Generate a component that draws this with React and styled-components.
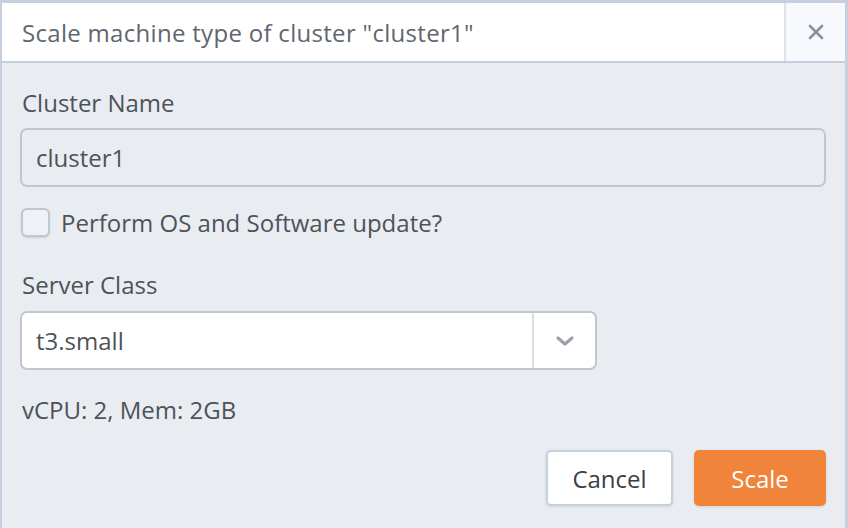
import React, { useState } from "react";
import styled, { createGlobalStyle } from "styled-components";

const Global = createGlobalStyle`
  html, body { margin: 0; padding: 0; background: #e9edf2; }
  body { font-family: "Open Sans", "Noto Sans", sans-serif; }
  * { box-sizing: border-box; }
`;

const Dialog = styled.div`
  width: 848px;
  height: 528px;
  background: #e9edf2;
  border-top: 3px solid #c6cfdd;
  border-left: 2px solid #c6cfdd;
  border-right: 3px solid #c6cfdd;
  display: flex;
  flex-direction: column;
`;

const Header = styled.div`
  height: 60px;
  background: #fff;
  border-bottom: 2px solid #c6cfdd;
  display: flex;
  align-items: stretch;
`;

const Title = styled.h3`
  flex: 1;
  margin: 0;
  padding-left: 20px;
  display: flex;
  align-items: center;
  font-size: 24px;
  font-weight: 400;
  color: #5f6670;
  letter-spacing: 0.3px;
`;

const Close = styled.button`
  width: 61px;
  border: none;
  border-left: 2px solid #dfe4ec;
  background: #f8f9fc;
  display: flex;
  align-items: center;
  justify-content: center;
  padding: 0;
  cursor: pointer;
`;

const Body = styled.div`
  padding: 24px 19px 0 18px;
  display: flex;
  flex-direction: column;
`;

const Label = styled.label`
  font-size: 24px;
  color: #4d5359;
  margin-left: 2px;
  line-height: 32px;
`;

const TextInput = styled.input`
  margin-top: 9px;
  height: 59px;
  border: 2px solid #c3c6ca;
  border-radius: 7px;
  background: #e9edf2;
  font-family: inherit;
  font-size: 24px;
  color: #4d5359;
  padding: 0 14px;
  outline: none;
`;

const CheckRow = styled.label`
  display: flex;
  align-items: center;
  gap: 11px;
  margin-top: 21px;
  font-size: 24px;
  line-height: 29px;
  color: #4d5359;
  margin-left: 1px;
`;

const Box = styled.span`
  width: 29px;
  height: 29px;
  border: 2px solid #c3c6ca;
  border-radius: 6px;
  background: #eef1f5;
  box-shadow: 0 1px 2px rgba(0, 0, 0, 0.12);
`;

const Section = styled.div`
  margin-top: 32px;
  display: flex;
  flex-direction: column;
`;

const Select = styled.div`
  margin-top: 10px;
  width: 577px;
  height: 59px;
  border: 2px solid #c3c6ca;
  border-radius: 7px;
  background: #fff;
  display: flex;
  align-items: stretch;
`;

const SelectValue = styled.div`
  flex: 1;
  display: flex;
  align-items: center;
  padding-left: 14px;
  font-size: 24px;
  color: #4d5359;
  border-right: 2px solid #dcdee1;
`;

const Caret = styled.div`
  width: 61px;
  display: flex;
  align-items: center;
  justify-content: center;
`;

const Info = styled.div`
  margin-top: 24px;
  margin-left: 2px;
  font-size: 24px;
  line-height: 32px;
  color: #4d5359;
`;

const Footer = styled.div`
  margin-top: 24px;
  display: flex;
  justify-content: flex-end;
  gap: 21px;
`;

const Button = styled.button`
  height: 56px;
  width: ${(p) => p.w}px;
  border-radius: 5px;
  font-family: inherit;
  font-size: 24px;
  cursor: pointer;
  border: 2px solid ${(p) => (p.primary ? "#f0843a" : "#c6cfdd")};
  background: ${(p) => (p.primary ? "#f0843a" : "#fff")};
  color: ${(p) => (p.primary ? "#fff" : "#3a3f45")};
  box-shadow: 0 1px 3px rgba(0, 0, 0, 0.1);
`;

export default function App() {
  const [name, setName] = useState("cluster1");
  return (
    <>
      <Global />
      <Dialog>
        <Header>
          <Title>Scale machine type of cluster "cluster1"</Title>
          <Close aria-label="close">
            <svg width="16" height="16" viewBox="0 0 16 16">
              <path d="M2 2 L14 14 M14 2 L2 14" stroke="#8892a4" strokeWidth="2.6" strokeLinecap="round" />
            </svg>
          </Close>
        </Header>
        <Body>
          <Label>Cluster Name</Label>
          <TextInput value={name} onChange={(e) => setName(e.target.value)} />
          <CheckRow>
            <Box />
            Perform OS and Software update?
          </CheckRow>
          <Section>
            <Label>Server Class</Label>
            <Select>
              <SelectValue>t3.small</SelectValue>
              <Caret>
                <svg width="20" height="12" viewBox="0 0 20 12">
                  <path d="M3 3 L10 9 L17 3" fill="none" stroke="#9aa0a8" strokeWidth="3.2" strokeLinecap="round" strokeLinejoin="round" />
                </svg>
              </Caret>
            </Select>
          </Section>
          <Info>vCPU: 2, Mem: 2GB</Info>
          <Footer>
            <Button w={127}>Cancel</Button>
            <Button w={132} primary>Scale</Button>
          </Footer>
        </Body>
      </Dialog>
    </>
  );
}
